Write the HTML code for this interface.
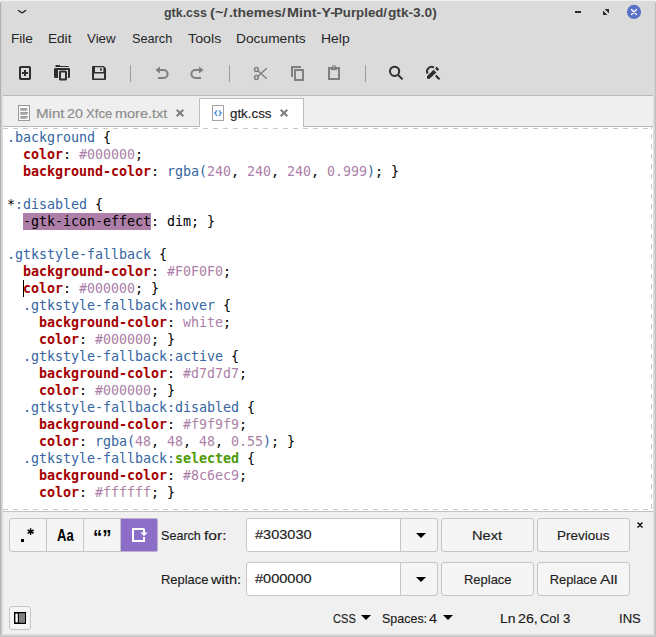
<!DOCTYPE html>
<html><head><meta charset="utf-8"><title>gtk.css (~/.themes/Mint-Y-Purpled/gtk-3.0)</title>
<style>
*{box-sizing:border-box;margin:0;padding:0}
html,body{width:656px;height:637px;overflow:hidden;background:#dbdbdb}
body{position:relative;font-family:"Liberation Sans",sans-serif;font-size:13.2px;color:#303030}
div,span,svg{position:absolute}
.t{-webkit-text-stroke:0.15px currentColor;height:30px;line-height:30px;white-space:nowrap;transform-origin:0 0;display:block}
#edgeL{left:0;top:0;width:2px;height:637px;background:linear-gradient(to right,#b2b2b2 0,#b2b2b2 1px,#d3d3d3 1px,#d3d3d3 2px)}
#edgeR{left:654px;top:0;width:2px;height:637px;background:linear-gradient(to right,#d6d6d6 0,#d6d6d6 1px,#bcbcbc 1px,#bcbcbc 2px)}
#edgeB{left:0;top:635px;width:656px;height:2px;background:linear-gradient(to bottom,#d6d6d6 0,#d6d6d6 1px,#c0c0c0 1px,#c0c0c0 2px)}
#edgeT{left:0;top:0;width:656px;height:1px;background:#f2f2f2;z-index:2}
#tbline{left:3px;top:95px;width:650px;height:1px;background:#b9b9b9}
#tabbar{left:3px;top:96px;width:650px;height:30px;background:#efefef}
#tabline{left:3px;top:126px;width:650px;height:1px;background:#b9b9b9}
#tabact{left:199px;top:98px;width:105px;height:29px;background:#fff;border:1px solid #bdbdbd;border-bottom:none}
#editor{left:3px;top:127px;width:650px;height:384px;background:#fff}
#edline{left:3px;top:511px;width:650px;height:1px;background:#c2c2c2}
.dh{left:3px;width:648px;height:1px;background:repeating-linear-gradient(to right,#c8c8c8 0,#c8c8c8 5px,transparent 5px,transparent 10px)}
.dv{left:651px;top:127px;width:1px;height:383px;background:repeating-linear-gradient(to bottom,#c8c8c8 0,#c8c8c8 2px,transparent 2px,transparent 7px,#c8c8c8 7px,#c8c8c8 10px);}
#code{left:7px;top:129px;font-family:"DejaVu Sans Mono","Liberation Mono",monospace;font-size:13.333px;line-height:17px;white-space:pre;color:#000;letter-spacing:-0.027px}
#code div{position:static;height:17px}
#code div.bl{height:16px}
#code span{position:static}
.s{color:#3465a4}.p{color:#a40000;font-weight:bold}.v{color:#ad7fa8}.g{color:#4e9a06;font-weight:bold}
.hl{background:#ad7fa8;color:#000;display:inline-block;height:17px;line-height:17px;vertical-align:top}
#cursor{left:23px;top:280px;width:1px;height:17px;background:#000}
#bottom{left:3px;top:512px;width:650px;height:122px;background:#f0f0f0}
.btn{height:34px;background:#f5f5f5;border:1px solid #c6c6c6;border-radius:3px}
.entry{height:34px;background:#fff;border:1px solid #c6c6c6;border-radius:3px}
.combo{height:34px;width:38px;left:400px;background:#f5f5f5;border:1px solid #c6c6c6;border-radius:0 3px 3px 0}
#ic{left:0;top:0;width:656px;height:637px;overflow:visible}
</style></head><body>
<div id="edgeT"></div><div id="edgeL"></div><div id="edgeR"></div><div id="edgeB"></div>
<div id="tbline"></div>
<div id="tabbar"></div>
<div id="tabline"></div>
<div id="tabact"></div>
<div id="editor"></div>
<div class="dh" style="top:128px"></div>
<div class="dh" style="top:509px"></div>
<div class="dv"></div>
<div id="edline"></div>
<div id="code"><div><span class="s">.background</span> {</div><div>  <span class="p">color</span>: <span class="v">#000000</span>;</div><div>  <span class="p">background-color</span>: <span class="s">rgba(</span><span class="v">240</span>, <span class="v">240</span>, <span class="v">240</span>, <span class="v">0.999</span><span class="s">)</span>; }</div><div class="bl"> </div><div>*<span class="s">:disabled</span> {</div><div>  <span class="hl">-gtk-icon-effect</span>: dim; }</div><div class="bl"> </div><div><span class="s">.gtkstyle-fallback</span> {</div><div>  <span class="p">background-color</span>: <span class="v">#F0F0F0</span>;</div><div>  <span class="p">color</span>: <span class="v">#000000</span>; }</div><div>  <span class="s">.gtkstyle-fallback:hover</span> {</div><div>    <span class="p">background-color</span>: <span class="v">white</span>;</div><div>    <span class="p">color</span>: <span class="v">#000000</span>; }</div><div>  <span class="s">.gtkstyle-fallback:active</span> {</div><div>    <span class="p">background-color</span>: <span class="v">#d7d7d7</span>;</div><div>    <span class="p">color</span>: <span class="v">#000000</span>; }</div><div>  <span class="s">.gtkstyle-fallback:disabled</span> {</div><div>    <span class="p">background-color</span>: <span class="v">#f9f9f9</span>;</div><div>    <span class="p">color</span>: <span class="s">rgba(</span><span class="v">48</span>, <span class="v">48</span>, <span class="v">48</span>, <span class="v">0.55</span><span class="s">)</span>; }</div><div>  <span class="s">.gtkstyle-fallback:</span><span class="g">selected</span> {</div><div>    <span class="p">background-color</span>: <span class="v">#8c6ec9</span>;</div><div>    <span class="p">color</span>: <span class="v">#ffffff</span>; }</div></div>
<div id="cursor"></div>
<div id="bottom"></div>
<!-- toggle group -->
<div class="btn" style="left:9px;top:518px;width:149px"></div>
<div style="left:46px;top:519px;width:1px;height:32px;background:#c6c6c6"></div>
<div style="left:83px;top:519px;width:1px;height:32px;background:#c6c6c6"></div>
<div style="left:120px;top:518px;width:38px;height:34px;background:#8c6ec9;border-radius:0 2.5px 2.5px 0;border:1px solid #bab1d3;border-left:1px solid #c6c6c6"></div>
<div class="entry" style="left:246px;top:518px;width:192px"></div>
<div class="combo" style="top:518px"></div>
<div class="entry" style="left:246px;top:562px;width:192px"></div>
<div class="combo" style="top:562px"></div>
<div class="btn" style="left:441px;top:518px;width:93px"></div>
<div class="btn" style="left:537px;top:518px;width:93px"></div>
<div class="btn" style="left:441px;top:562px;width:93px"></div>
<div class="btn" style="left:537px;top:562px;width:93px"></div>
<div class="btn" style="left:9px;top:606px;width:22px;height:24px"></div>
<div class="g"><span class="t" style="left:164.21px;top:-1.60px;font-size:12.9px;font-weight:bold;color:#454545;-webkit-text-stroke:0;transform:scaleX(0.9648)">gtk.css</span> <span class="t" style="left:210.21px;top:-1.60px;font-size:12.9px;font-weight:bold;color:#454545;-webkit-text-stroke:0;transform:scaleX(1.1446)">(~/</span><span class="t" style="left:228.83px;top:-1.60px;font-size:12.9px;font-weight:bold;color:#454545;-webkit-text-stroke:0;transform:scaleX(1.0819)">.themes/</span><span class="t" style="left:286.80px;top:-1.60px;font-size:12.9px;font-weight:bold;color:#454545;-webkit-text-stroke:0;transform:scaleX(1.1170)">Mint-Y-</span><span class="t" style="left:334.17px;top:-1.60px;font-size:12.9px;font-weight:bold;color:#454545;-webkit-text-stroke:0;transform:scaleX(1.0286)">Purpled/</span><span class="t" style="left:387.57px;top:-1.60px;font-size:12.9px;font-weight:bold;color:#454545;-webkit-text-stroke:0;transform:scaleX(1.0621)">gtk-3.0)</span></div>
<div class="g"><span class="t" style="left:10.74px;top:24.00px;font-size:12.9px;font-weight:normal;color:#262626;-webkit-text-stroke:0;transform:scaleX(1.0542)">File</span></div>
<div class="g"><span class="t" style="left:47.54px;top:24.00px;font-size:12.9px;font-weight:normal;color:#262626;-webkit-text-stroke:0;transform:scaleX(1.0534)">Edit</span></div>
<div class="g"><span class="t" style="left:87.20px;top:24.00px;font-size:12.9px;font-weight:normal;color:#262626;-webkit-text-stroke:0;transform:scaleX(1.0328)">View</span></div>
<div class="g"><span class="t" style="left:131.90px;top:24.00px;font-size:12.9px;font-weight:normal;color:#262626;-webkit-text-stroke:0;transform:scaleX(0.9863)">Search</span></div>
<div class="g"><span class="t" style="left:188.18px;top:24.00px;font-size:12.9px;font-weight:normal;color:#262626;-webkit-text-stroke:0;transform:scaleX(1.1081)">Tools</span></div>
<div class="g"><span class="t" style="left:236.42px;top:24.00px;font-size:12.9px;font-weight:normal;color:#262626;-webkit-text-stroke:0;transform:scaleX(1.0684)">Documents</span></div>
<div class="g"><span class="t" style="left:321.41px;top:24.00px;font-size:12.9px;font-weight:normal;color:#262626;-webkit-text-stroke:0;transform:scaleX(1.0800)">Help</span></div>
<div class="g"><span class="t" style="left:35.52px;top:99.00px;font-size:12.9px;font-weight:normal;color:#8c8c8c;transform:scaleX(1.1706)">Mint</span> <span class="t" style="left:66.93px;top:99.00px;font-size:12.9px;font-weight:normal;color:#8c8c8c;transform:scaleX(1.1026)">20</span> <span class="t" style="left:85.69px;top:99.00px;font-size:12.9px;font-weight:normal;color:#8c8c8c;transform:scaleX(1.0204)">Xfce</span> <span class="t" style="left:114.79px;top:99.00px;font-size:12.9px;font-weight:normal;color:#8c8c8c;transform:scaleX(1.1237)">more.txt</span></div>
<div class="g"><span class="t" style="left:229.88px;top:99.00px;font-size:12.9px;font-weight:normal;color:#1c1c1c;transform:scaleX(1.0347)">gtk.css</span></div>
<div class="g"><span class="t" style="left:160.81px;top:521.00px;font-size:12.9px;font-weight:normal;color:#1c1c1c;transform:scaleX(0.9762)">Search</span> <span class="t" style="left:204.10px;top:521.00px;font-size:12.9px;font-weight:normal;color:#1c1c1c;transform:scaleX(1.2076)">for:</span></div>
<div class="g"><span class="t" style="left:160.59px;top:565.00px;font-size:12.9px;font-weight:normal;color:#1c1c1c;transform:scaleX(1.0022)">Replace</span> <span class="t" style="left:211.23px;top:565.00px;font-size:12.9px;font-weight:normal;color:#1c1c1c;transform:scaleX(1.1346)">with:</span></div>
<div class="g"><span class="t" style="left:255.20px;top:520.00px;font-size:12.9px;font-weight:normal;color:#1c1c1c;transform:scaleX(1.1283)">#303030</span></div>
<div class="g"><span class="t" style="left:255.20px;top:564.00px;font-size:12.9px;font-weight:normal;color:#1c1c1c;transform:scaleX(1.1283)">#000000</span></div>
<div class="g"><span class="t" style="left:472.36px;top:521.00px;font-size:12.9px;font-weight:normal;color:#1c1c1c;transform:scaleX(1.1346)">Next</span></div>
<div class="g"><span class="t" style="left:556.55px;top:521.00px;font-size:12.9px;font-weight:normal;color:#1c1c1c;transform:scaleX(1.0456)">Previous</span></div>
<div class="g"><span class="t" style="left:463.84px;top:565.00px;font-size:12.9px;font-weight:normal;color:#1c1c1c;transform:scaleX(1.0055)">Replace</span></div>
<div class="g"><span class="t" style="left:549.69px;top:565.00px;font-size:12.9px;font-weight:normal;color:#1c1c1c;transform:scaleX(1.0000)">Replace</span> <span class="t" style="left:599.70px;top:565.00px;font-size:12.9px;font-weight:normal;color:#1c1c1c;transform:scaleX(1.2161)">All</span></div>
<div class="g"><span class="t" style="left:332.83px;top:604.00px;font-size:12.9px;font-weight:normal;color:#1c1c1c;transform:scaleX(0.8590)">CSS</span></div>
<div class="g"><span class="t" style="left:382.11px;top:604.00px;font-size:12.9px;font-weight:normal;color:#1c1c1c;transform:scaleX(0.9680)">Spaces:</span> <span class="t" style="left:428.87px;top:604.00px;font-size:12.9px;font-weight:normal;color:#1c1c1c;transform:scaleX(1.1276)">4</span></div>
<div class="g"><span class="t" style="left:499.51px;top:604.00px;font-size:12.9px;font-weight:normal;color:#1c1c1c;transform:scaleX(1.0859)">Ln</span> <span class="t" style="left:518.03px;top:604.00px;font-size:12.9px;font-weight:normal;color:#1c1c1c;transform:scaleX(1.1061)">26,</span> <span class="t" style="left:540.00px;top:604.00px;font-size:12.9px;font-weight:normal;color:#1c1c1c;transform:scaleX(0.9999)">Col</span> <span class="t" style="left:562.89px;top:604.00px;font-size:12.9px;font-weight:normal;color:#1c1c1c;transform:scaleX(1.0243)">3</span></div>
<div class="g"><span class="t" style="left:618.87px;top:604.00px;font-size:12.9px;font-weight:normal;color:#1c1c1c;transform:scaleX(1.0173)">INS</span></div>
<div class="g"><span class="t" style="left:56.70px;top:520.73px;font-size:17px;font-weight:bold;color:#000;-webkit-text-stroke:0;transform-origin:0 20px;transform:scale(0.7648,0.9985)">Aa</span></div>
<div class="g"><span class="t" style="left:92.84px;top:523.46px;font-size:20px;font-weight:bold;color:#000;-webkit-text-stroke:0;transform-origin:0 22px;transform:scale(0.9257,1.0960)">“”</span></div>
<svg id="ic" viewBox="0 0 656 637">
<!-- titlebar -->
<path d="M18.4 10.5 L20.7 12.2 Q22 13.1 23.3 12.2 L25.6 10.5" fill="none" stroke="#2e2e2e" stroke-width="1.45" stroke-linecap="round" stroke-linejoin="round"/>
<rect x="0" y="0" width="1" height="2" fill="#f6f6f6"/><rect x="655" y="0" width="1" height="2" fill="#f6f6f6"/>
<rect x="575" y="11" width="6" height="2" fill="#2a2a2a"/>
<path d="M604.6 9 H609 V13.4 Z M603 10.6 V15 H607.4 Z" fill="#2a2a2a"/>
<circle cx="634" cy="11.9" r="7.05" fill="#5971c6"/>
<path d="M631.5 9.4 L636.5 14.4 M636.5 9.4 L631.5 14.4" stroke="#fff" stroke-width="1.35" stroke-linecap="round" fill="none"/>
<!-- toolbar: new -->
<rect x="20" y="67" width="10" height="12" rx="0.8" fill="none" stroke="#2e2e2e" stroke-width="2"/>
<path d="M22 73 H28 M25 70 V76" stroke="#2e2e2e" stroke-width="2" fill="none"/>
<!-- open -->
<path d="M55.5 66 V65.6 Q55.5 65 56.2 65 H59.5 L60.5 66 H68.3 Q69 66 69 66.7 V67 H55.5 Z" fill="#2e2e2e"/>
<path d="M54 69.2 Q54 68 55.2 68 H68.8 Q70 68 70 69.2 V76.8 Q70 78 68.8 78 H68 V70 H58 V78 H55.2 Q54 78 54 76.8 Z" fill="#2e2e2e"/>
<rect x="60" y="71.6" width="6" height="8" rx="0.6" fill="none" stroke="#2e2e2e" stroke-width="2"/>
<!-- save -->
<path fill-rule="evenodd" d="M92 67 Q92 66 93 66 H103.8 L106 68.2 V79 Q106 80 105 80 H93 Q92 80 92 79 Z M95 67.2 V71.9 H103.4 V67.2 Z M94 73.4 V78.6 H104 V73.4 Z" fill="#2e2e2e"/>
<rect x="100.1" y="68.2" width="1.7" height="2.5" fill="#2e2e2e"/>
<!-- separators -->
<rect x="130" y="65" width="1" height="17" fill="#9a9a9a"/>
<rect x="229" y="65" width="1" height="17" fill="#9a9a9a"/>
<rect x="365" y="65" width="1" height="17" fill="#9a9a9a"/>
<!-- undo -->
<path d="M159.5 70 H163.6 A4 4 0 0 1 163.6 78 H158" fill="none" stroke="#808080" stroke-width="2"/>
<path d="M155.4 70 L160 66.6 V73.4 Z" fill="#808080"/>
<!-- redo -->
<path d="M199.5 70 H195.4 A4 4 0 0 0 195.4 78 H201" fill="none" stroke="#808080" stroke-width="2"/>
<path d="M203.6 70 L199 66.6 V73.4 Z" fill="#808080"/>
<!-- cut -->
<circle cx="256.4" cy="69.5" r="1.9" fill="none" stroke="#808080" stroke-width="1.5"/>
<circle cx="256.4" cy="77.5" r="1.9" fill="none" stroke="#808080" stroke-width="1.5"/>
<path d="M257.8 70.8 L266.8 78.7 M257.8 76.2 L266.8 68.3" fill="none" stroke="#808080" stroke-width="1.5"/>
<!-- copy -->
<path d="M292 77 V67 H301" fill="none" stroke="#808080" stroke-width="2"/>
<rect x="295" y="70" width="8" height="10" fill="none" stroke="#808080" stroke-width="2"/>
<!-- paste -->
<rect x="329" y="68" width="10" height="11" fill="none" stroke="#808080" stroke-width="2"/>
<rect x="331" y="69" width="6" height="1.1" fill="#808080"/>
<circle cx="334.05" cy="67" r="1.55" fill="none" stroke="#808080" stroke-width="1.1"/>
<!-- search -->
<circle cx="394.6" cy="71.3" r="4.6" fill="none" stroke="#2e2e2e" stroke-width="2"/>
<path d="M398.2 75 L402.6 79.4" stroke="#2e2e2e" stroke-width="2" fill="none"/>
<!-- search replace -->
<path d="M427.6 73.6 A4.6 4.6 0 0 1 434 67.5" fill="none" stroke="#2e2e2e" stroke-width="2"/>
<path d="M435.7 75.5 L439.5 79.3" stroke="#2e2e2e" stroke-width="2" fill="none"/>
<path d="M427 78.7 L427 76.3 L433.6 69.7 L436.3 72.4 L429.6 78.7 Z" fill="#2e2e2e"/>
<path d="M435 68.5 L436.7 66.8 L439.1 69.2 L437.4 70.9 Z" fill="#2e2e2e"/>
<!-- tab icons -->
<rect x="18.5" y="105.5" width="11" height="15" fill="#fcfcfc" stroke="#9a9a9a" stroke-width="1"/>
<path d="M20.2 108.1 H27 V109.2 H28 V110.2 H26 V110.8 H20.2 Z M20.2 112.1 H28 V114 H27 V114.7 H20.2 Z M20.2 116 H28 V117.8 H26.5 V118.7 H20.2 Z" fill="#a3a3a3"/>
<path d="M176.7 109.7 L183.3 116.3 M183.3 109.7 L176.7 116.3" stroke="#7e7e7e" stroke-width="2" fill="none"/>
<rect x="212.5" y="105.5" width="11" height="15" fill="#fdfdfd" stroke="#a2a2a2" stroke-width="1"/>
<path d="M217.2 110.5 Q215.9 110.5 215.9 111.6 V112.2 L214.7 113 L215.9 113.8 V114.4 Q215.9 115.5 217.2 115.5 M218.8 110.5 Q220.1 110.5 220.1 111.6 V112.2 L221.3 113 L220.1 113.8 V114.4 Q220.1 115.5 218.8 115.5" stroke="#4189e6" stroke-width="1.25" fill="none"/>
<path d="M280.7 109.7 L287.3 116.3 M287.3 109.7 L280.7 116.3" stroke="#7e7e7e" stroke-width="2" fill="none"/>
<!-- search panel icons -->
<rect x="21" y="539" width="3" height="3" fill="#000"/>
<path d="M30.6 528.3 V535.1 M27.6 530 L33.6 533.4 M33.6 530 L27.6 533.4" stroke="#000" stroke-width="1.45" fill="none"/>
<path d="M144 533 V529.6 Q144 529 143.4 529 H133 V541 H144 V537" fill="none" stroke="#fff" stroke-width="2"/>
<path d="M140.4 532.6 H147.6 L144 536.2 Z" fill="#fff"/>
<path d="M416 533 H426 L421 538 Z" fill="#000"/>
<path d="M416 577 H426 L421 582 Z" fill="#000"/>
<path d="M638 523 L642 527 M642 523 L638 527" stroke="#000" stroke-width="1.45" stroke-linecap="round" fill="none"/><rect x="639.2" y="524.2" width="1.6" height="1.6" fill="#000"/>
<!-- status -->
<rect x="14" y="612" width="12" height="12" fill="#000"/>
<rect x="15.4" y="613.6" width="2.4" height="8.8" fill="#fff"/>
<rect x="19" y="613.2" width="6" height="9.6" fill="#808080"/>
<path d="M361 615 H371 L366 620 Z" fill="#000"/>
<path d="M443 615 H453 L448 620 Z" fill="#000"/>
</svg>
</body></html>
